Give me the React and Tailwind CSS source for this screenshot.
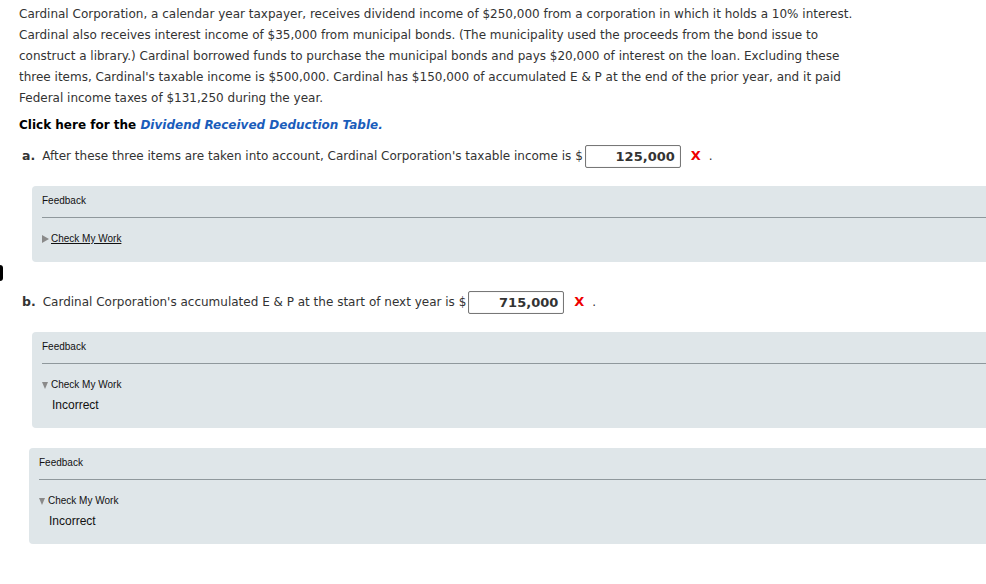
import React from 'react';

const Panel = ({ open, indent = 'ml-8' }) => (
  <div className={`${indent} bg-[#dfe6e9] rounded-l-[4px] pl-[10px] pt-[9px] ${open ? 'pb-[15px]' : 'pb-[17px]'} font-['Liberation_Sans',Arial,sans-serif]`}>
    <div className="text-[10px] leading-[12px] text-[#111]">Feedback</div>
    <div className="mt-[10px] border-t border-[#8f989c]" />
    <div className="mt-[15px] flex items-center text-[10px] leading-[12px] text-[#111]">
      {open ? (
        <span className="mr-[3px] mt-[1px] w-0 h-0 border-l-[3.5px] border-r-[3.5px] border-t-[7px] border-l-transparent border-r-transparent border-t-[#8a8a8a]" />
      ) : (
        <span className="mr-[2px] w-0 h-0 border-t-[4px] border-b-[4px] border-l-[7px] border-t-transparent border-b-transparent border-l-[#8a8a8a]" />
      )}
      <span className={open ? '' : 'underline'}>Check My Work</span>
    </div>
    {open && (
      <div className="mt-[6px] pl-[10px] text-[12px] leading-[16px] text-[#111]">Incorrect</div>
    )}
  </div>
);

const Answer = ({ value }) => (
  <>
    <span className="inline-block align-middle ml-[2px] w-[96px] h-[23px] border border-[#777] rounded-[2px] shadow-[inset_0_0_1px_rgba(0,0,0,0.3)] text-right pr-[5px] font-bold text-[#333] text-[13px] leading-[21px]">
      {value}
    </span>
    <span className="ml-[10px] text-[#e00] font-bold text-[13px]">X</span>
    <span className="ml-[8px]">.</span>
  </>
);

export default function App() {
  return (
    <div className="relative w-[986px] h-[584px] bg-white overflow-hidden font-['DejaVu_Sans',Verdana,sans-serif] text-[12px] text-[#333]">
      <div className="absolute left-0 top-[265px] w-[3px] h-[16px] bg-black rounded-r-full" />
      <div className="pl-[19px] pt-[4px]">
        <p className="leading-[21px] whitespace-nowrap">
          Cardinal Corporation, a calendar year taxpayer, receives dividend income of $250,000 from a corporation in which it holds a 10% interest.
          <br />
          Cardinal also receives interest income of $35,000 from municipal bonds. (The municipality used the proceeds from the bond issue to
          <br />
          construct a library.) Cardinal borrowed funds to purchase the municipal bonds and pays $20,000 of interest on the loan. Excluding these
          <br />
          three items, Cardinal's taxable income is $500,000. Cardinal has $150,000 of accumulated E &amp; P at the end of the prior year, and it paid
          <br />
          Federal income taxes of $131,250 during the year.
        </p>
        <p className="mt-[6px] leading-[21px] font-bold text-black">
          Click here for the <span className="italic text-[#1a5dbb]">Dividend Received Deduction Table.</span>
        </p>
      </div>

      <div className="mt-[8px] pl-[22px] leading-[24px]">
        <span className="font-bold text-[12.5px]">a.</span>
        <span className="ml-[7px]">After these three items are taken into account, Cardinal Corporation's taxable income is $</span>
        <Answer value="125,000" />
      </div>

      <div className="mt-[18px]">
        <Panel />
      </div>

      <div className="mt-[28px] pl-[22px] leading-[24px]">
        <span className="font-bold text-[12.5px]">b.</span>
        <span className="ml-[7px]">Cardinal Corporation's accumulated E &amp; P at the start of next year is $</span>
        <Answer value="715,000" />
      </div>

      <div className="mt-[18px]">
        <Panel open />
      </div>

      <div className="mt-[20px]">
        <Panel open indent="ml-[29px]" />
      </div>
    </div>
  );
}
